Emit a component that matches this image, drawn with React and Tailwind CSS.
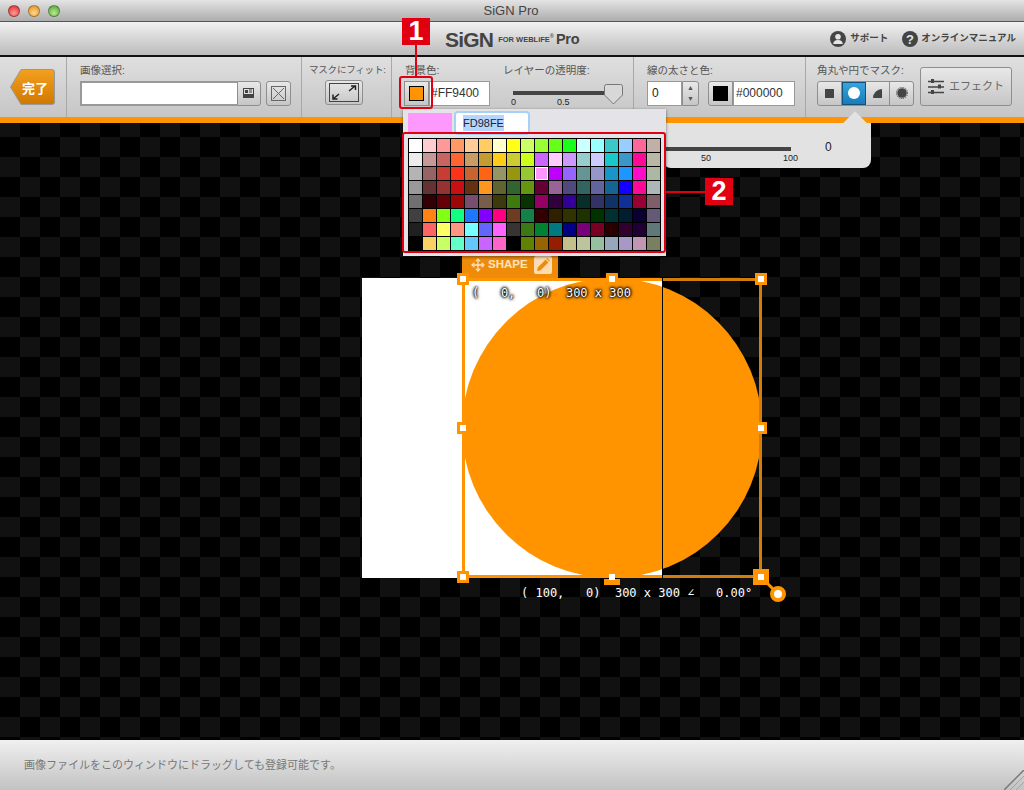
import { Move } from "lucide-react";

const jp = "font-['Liberation_Sans','Noto_Sans_CJK_JP',sans-serif]";

const palette = [
  "ffffff ffccd0 ff9999 ff9966 ffcc99 ffcc66 ffffcc ffff19 ccff66 99ff33 66ff19 19ff19 ccffff 99ffff 3cc8c8 99ccff ff6699 c0b0a8",
  "ececec c89898 c86464 ff6433 c89c64 c49c32 ffcc19 cccc32 ccff19 cc66ff ffccff cc99ff 99cccc ccccff 19c8c8 3c96c8 ff0a96 b8b8a4",
  "b4b4b4 966464 c83c32 ff3219 c86432 ff6414 969664 96960f 96c832 ff96ff c000ff 9664ff 649696 9696c8 1996c8 1e96ff ff0ac8 acb8a4",
  "999999 643232 963232 c80f14 643210 ff961e 5f6432 326432 649610 640032 966496 504a7c 326460 64649c 146496 1400ff ff0a96 acb8b8",
  "707070 320005 640008 9c0808 784e6e 785e4a 3c3a0c 3e7a0e 083200 960064 32003c 320096 082e2c 323264 103264 103096 960032 7e5e68",
  "404040 ff8214 82ff14 14ff82 1e78ff 8200ff ff0082 6e3c20 148246 320000 302000 323200 1e3200 003200 003030 001e30 0a0032 645a78",
  "202020 ff6464 ffff64 ff9682 78ffff 6464ff ff64ff 383434 3c7814 008232 007882 000082 780078 780023 280000 32002d 1e0032 5f7878",
  "000000 fad264 c8ff64 64ffc8 64c8ff c864ff ff64c8 000000 5f8200 966400 961e00 c4c08c bcc49c 96c0a0 96a8be a898c8 c096b4 788060",
].map((row) => row.split(" "));

function Label({ children, className = "text-[10.5px]" }) {
  return <p className={`leading-none text-[#555] whitespace-nowrap ${className}`}>{children}</p>;
}

function Light({ className }) {
  return <span className={`h-3 w-3 rounded-full border border-black/30 ${className}`} />;
}

function TitleBar() {
  return (
    <div className="relative flex h-[22px] items-center border-b border-[#555] bg-gradient-to-b from-[#e4e4e4] to-[#adadad] pl-2">
      <div className="flex gap-2">
        <Light className="bg-[radial-gradient(circle_at_50%_70%,#ff9a94,#d8262a)]" />
        <Light className="bg-[radial-gradient(circle_at_50%_70%,#ffd88a,#de8a1e)]" />
        <Light className="bg-[radial-gradient(circle_at_50%_70%,#b8ea8e,#4f9d35)]" />
      </div>
      <p className="flex-1 pr-[62px] text-center font-['Liberation_Sans',sans-serif] text-[13px] text-[#444]">SiGN Pro</p>
    </div>
  );
}

function HeaderBar() {
  return (
    <div className="flex h-[35px] items-center border-b-2 border-[#111] bg-gradient-to-b from-[#f1f1f1] to-[#bcbcbc] pl-[445px] pr-[8px]">
      <span className="mt-[1px] font-['Liberation_Sans',sans-serif] text-[21px] font-bold leading-none tracking-[-0.8px] text-[#444]">SiGN</span>
      <span className="ml-[5px] mt-[3px] font-['Liberation_Sans',sans-serif] text-[7.5px] font-bold text-[#444]">FOR WEBLiFE</span>
      <span className="mb-[3px] text-[5px] text-[#444]">®</span>
      <span className="ml-[2px] mt-[1px] font-['Liberation_Sans',sans-serif] text-[14.5px] font-bold leading-none tracking-[-0.3px] text-[#444]">Pro</span>
      <div className={`ml-auto flex items-center text-[9.5px] font-bold text-[#444] ${jp}`}>
        <svg width="16" height="16" viewBox="0 0 16 16">
          <circle cx="8" cy="8" r="8" fill="#444" />
          <circle cx="8" cy="5.8" r="2.8" fill="#e4e4e4" />
          <path d="M3.2 13 Q3.5 9 8 9 Q12.5 9 12.8 13 Z" fill="#e4e4e4" />
        </svg>
        <span className="ml-[4px]">サポート</span>
        <svg className="ml-[14px]" width="16" height="16" viewBox="0 0 16 16">
          <circle cx="8" cy="8" r="8" fill="#444" />
          <text x="8" y="12.5" textAnchor="middle" fontSize="13" fontWeight="700" fontFamily="Liberation Sans" fill="#e4e4e4">?</text>
        </svg>
        <span className="ml-[3px]">オンラインマニュアル</span>
      </div>
    </div>
  );
}

function Section({ className = "", children }) {
  return <div className={`relative h-full shrink-0 border-r border-[#a8a8a8] ${className}`}>{children}</div>;
}

function Toolbar() {
  const box = "border border-[#8e8e8e] bg-gradient-to-b from-[#e8e8e8] to-[#c6c6c6]";
  return (
    <div className={`flex h-[60px] bg-gradient-to-b from-[#dfdfdf] to-[#c6c6c6] ${jp}`}>
      <Section className="flex w-[67px] items-center pl-[10px]">
        <svg width="45" height="37" viewBox="0 0 45 37">
          <defs>
            <linearGradient id="done" x1="0" y1="0" x2="0" y2="1">
              <stop offset="0" stopColor="#f3a020" />
              <stop offset="1" stopColor="#d07800" />
            </linearGradient>
          </defs>
          <path d="M11 .5H42a2.5 2.5 0 0 1 2.5 2.5V33a2.5 2.5 0 0 1-2.5 2.5H11L.5 18Z" fill="url(#done)" stroke="#999" />
          <text x="25" y="24" textAnchor="middle" fontSize="13" fontWeight="700" fill="#fff" fontFamily="Noto Sans CJK JP">完了</text>
        </svg>
      </Section>

      <Section className="w-[235px] pl-[13px] pt-[8px]">
        <Label className="mb-[5px] text-[10.5px]">画像選択:</Label>
        <div className="flex items-center">
          <div className="h-[25px] w-[157px] border-2 border-r-0 border-[#999] bg-white" />
          <button className={`flex h-[25px] w-[24px] items-center justify-center rounded-r-[3px] ${box}`}>
            <svg width="12" height="11" viewBox="0 0 12 11">
              <rect width="11" height="10" fill="#444" />
              <rect x="1" y="1" width="9" height="5" fill="#ddd" />
              <rect x="2" y="2" width="3" height="3" fill="#444" />
              <path d="M6 2h3M6 4h3" stroke="#444" />
            </svg>
          </button>
          <button className={`ml-[5px] flex h-[25px] w-[25px] items-center justify-center rounded-[3px] ${box}`}>
            <svg width="15" height="15" viewBox="0 0 15 15" fill="none" stroke="#666">
              <rect x=".5" y=".5" width="14" height="14" />
              <path d="M2 2l11 11M13 2L2 13" />
            </svg>
          </button>
        </div>
      </Section>

      <Section className="w-[90px] pl-[7px] pt-[8px]">
        <Label className="mb-[5px] text-[9.5px] tracking-[-0.2px]">マスクにフィット:</Label>
        <button className={`ml-[16px] flex h-[25px] w-[38px] items-center justify-center rounded-[3px] ${box}`}>
          <svg width="30" height="19" viewBox="0 0 30 19" fill="none">
            <rect x=".5" y=".5" width="29" height="18" stroke="#444" />
            <path d="M20 8l6-5M22 3h4.5v4" stroke="#222" strokeWidth="1.5" />
            <path d="M10 11l-6 5M4 11.5V16h4.5" stroke="#222" strokeWidth="1.5" />
          </svg>
        </button>
      </Section>

      <Section className="w-[242px] pl-[13px] pt-[8px]">
        <div className="flex">
          <Label className="w-[98px] text-[10.5px]">背景色:</Label>
          <Label>レイヤーの透明度:</Label>
        </div>
        <div className="mt-[5px] flex items-start">
          <button className={`-ml-px flex h-[25px] w-[25px] shrink-0 items-center justify-center ${box}`}>
            <span className="h-[15px] w-[15px] border border-black bg-[#ff9400]" />
          </button>
          <div className="flex h-[25px] w-[61px] items-center border border-[#999] bg-white pl-[1px] font-['Liberation_Sans',sans-serif] text-[12px] text-[#333]">#FF9400</div>
          <div className="relative ml-[23px] mt-[10px] w-[110px]">
            <div className="h-[4px] w-[92px] bg-[#444]" />
            <div className="-ml-[2px] mt-[3px] flex font-['Liberation_Sans',sans-serif] text-[9px] leading-none text-[#222]">
              <span className="w-[46px]">0</span>
              <span>0.5</span>
            </div>
            <svg className="absolute left-[91px] top-[-7px]" width="19" height="21" viewBox="0 0 19 21">
              <path d="M.5 2.5a2 2 0 0 1 2-2h14a2 2 0 0 1 2 2V11l-9 9-9-9Z" fill="#d8d8d8" stroke="#777" />
            </svg>
          </div>
        </div>
      </Section>

      <Section className="w-[172px] pl-[13px] pt-[8px]">
        <Label className="mb-[5px] text-[10.5px]">線の太さと色:</Label>
        <div className="flex">
          <div className="flex h-[25px] w-[35px] items-center border border-[#999] bg-white pl-[4px] font-['Liberation_Sans',sans-serif] text-[12px] text-[#222]">0</div>
          <div className={`flex h-[25px] w-[17px] flex-col items-center justify-around rounded-r-[3px] text-[7px] leading-none text-[#555] ${box}`}>
            <span>▲</span>
            <span>▼</span>
          </div>
          <div className={`ml-[9px] flex h-[25px] w-[25px] items-center justify-center rounded-l-[3px] ${box}`}>
            <span className="h-[15px] w-[15px] bg-black" />
          </div>
          <div className="flex h-[25px] w-[62px] items-center border border-[#999] bg-white pl-[2px] font-['Liberation_Sans',sans-serif] text-[12px] text-[#333]">#000000</div>
        </div>
      </Section>

      <div className="h-full flex-1 pl-[11px] pt-[8px]">
        <div className="flex">
          <div>
            <Label className="mb-[5px] text-[10.5px]">角丸や円でマスク:</Label>
            <div className={`flex h-[25px] w-[97px] rounded-[3px] ${box}`}>
              <div className="flex w-[24px] items-center justify-center border-r border-[#8e8e8e]">
                <span className="h-[9px] w-[9px] bg-[#444]" />
              </div>
              <div className="flex w-[24px] items-center justify-center border border-[#14507a] bg-gradient-to-b from-[#38a4dc] to-[#147cb8]">
                <span className="h-[12px] w-[12px] rounded-full bg-white" />
              </div>
              <div className="flex w-[24px] items-center justify-center border-r border-[#8e8e8e]">
                <span className="h-[9px] w-[9px] rounded-tl-[9px] bg-[#444]" />
              </div>
              <div className="flex flex-1 items-center justify-center">
                <svg width="12" height="12" viewBox="0 0 12 12">
                  <circle cx="6" cy="6" r="4.8" fill="#444" />
                  <circle cx="6" cy="6" r="5.6" fill="none" stroke="#444" strokeDasharray="1.1 1.1" />
                </svg>
              </div>
            </div>
          </div>
          <button className={`ml-[6px] mt-[2px] flex h-[39px] w-[92px] items-center justify-center gap-[4px] rounded-[3px] text-[11px] text-[#666] ${box}`}>
            <svg width="17" height="16" viewBox="0 0 17 16">
              <path d="M0 2.5h16M0 8h16M0 13.5h16" stroke="#444" strokeWidth="1.5" />
              <rect x="3" y="0" width="3" height="4" fill="#444" />
              <rect x="10" y="5.5" width="3" height="4" fill="#444" />
              <rect x="3" y="11" width="3" height="4" fill="#444" />
            </svg>
            エフェクト
          </button>
        </div>
      </div>
    </div>
  );
}

function Handle({ className }) {
  return (
    <span className={`absolute flex items-center justify-center bg-[#ff9400] ${className}`}>
      <span className="h-[6px] w-[6px] bg-white" />
    </span>
  );
}

function Canvas() {
  return (
    <div className="relative flex-1 overflow-hidden bg-black bg-[conic-gradient(#000_25%,#111_0_50%,#000_0_75%,#111_0)] bg-[length:40px_40px] bg-[position:0px_-6px]">
      {/* page coordinates minus the 123px the bars above take up */}
      <div className="absolute left-[362px] top-[155px] h-[300px] w-[300px] bg-white" />
      <div className="absolute left-[462px] top-[155px] h-[300px] w-[300px] rounded-full bg-[#ff9400]" />
      <div className="absolute left-[662px] top-[155px] h-[300px] w-px bg-black" />

      <div className="absolute left-[462px] top-[155px] h-[3px] w-[200px] bg-[#ff9400]" />
      <div className="absolute left-[663px] top-[155px] h-[3px] w-[99px] bg-[#d27d0c]" />
      <div className="absolute left-[462px] top-[155px] h-[300px] w-[3px] bg-[#ff9400]" />
      <div className="absolute left-[759px] top-[155px] h-[300px] w-[3px] bg-[#d27d0c]" />
      <div className="absolute left-[462px] top-[452px] h-[3px] w-[200px] bg-[#ff9400]" />
      <div className="absolute left-[663px] top-[452px] h-[3px] w-[99px] bg-[#d27d0c]" />

      <div className="absolute left-[462px] top-[132px] flex h-[23px] w-[96px] items-center bg-[#ee8c0a] pb-[4px] pl-[9px] font-['Liberation_Sans',sans-serif] text-[11.5px] font-bold text-[#fde3c0]">
        <Move size={14} strokeWidth={2.2} />
        <span className="ml-[3px]">SHAPE</span>
        <span className="ml-[6px] flex h-[18px] w-[18px] items-center justify-center rounded-[2px] bg-[#fcdcb0]">
          <svg width="14" height="14" viewBox="0 0 14 14" fill="#ee8c0a">
            <path d="M1 13l.8-3.6L9.6 1.6l2.8 2.8-7.8 7.8Z" />
            <path d="M10.4.8 11.2 0 14 2.8l-.8.8Z" />
          </svg>
        </span>
      </div>

      <svg className="absolute left-[760px] top-[453px]" width="30" height="30" viewBox="0 0 30 30">
        <path d="M1 1l17 17" stroke="#ff9400" strokeWidth="3" />
        <circle cx="18" cy="18" r="6" fill="#fff" stroke="#ff9400" strokeWidth="4" />
      </svg>

      <Handle className="left-[457px] top-[150px] h-[12px] w-[12px]" />
      <Handle className="left-[606px] top-[150px] h-[12px] w-[12px]" />
      <Handle className="left-[755px] top-[150px] h-[12px] w-[12px]" />
      <Handle className="left-[457px] top-[299px] h-[12px] w-[12px]" />
      <Handle className="left-[755px] top-[299px] h-[12px] w-[12px]" />
      <Handle className="left-[457px] top-[448px] h-[12px] w-[12px]" />
      <span className="absolute left-[604px] top-[456px] h-[6px] w-[16px] bg-[#ff9400]" />
      <span className="absolute left-[609px] top-[451px] h-[6px] w-[6px] bg-white" />
      <Handle className="left-[753px] top-[446px] h-[16px] w-[16px]" />

      <p className="absolute left-[472px] top-[164px] whitespace-pre font-['DejaVu_Sans_Mono',monospace] text-[12px] leading-none text-white [text-shadow:0_0_2px_#000,0_0_3px_#000,0_0_3px_#000,0_0_4px_#000]">
        {"(   0,   0)  300 x 300"}
      </p>
      <p className="absolute left-[521px] top-[464px] whitespace-pre font-['DejaVu_Sans_Mono',monospace] text-[12px] leading-none text-white">
        {"( 100,   0)  300 x 300 ∠   0.00°"}
      </p>
    </div>
  );
}

function StatusBar() {
  return (
    <div className={`relative flex h-[50px] items-center overflow-hidden bg-gradient-to-b from-[#f0f0f0] to-[#c2c2c2] pl-[24px] text-[11px] text-[#777] ${jp}`}>
      画像ファイルをこのウィンドウにドラッグしても登録可能です。
      <svg className="absolute bottom-0 right-0" width="20" height="20" viewBox="0 0 20 20" fill="none">
        <path d="M0 20 20 0" stroke="#777" strokeWidth="1.5" />
        <path d="M6 20 20 6M12 20l8-8" stroke="#a4a4a4" />
      </svg>
    </div>
  );
}

function ColorPopover() {
  return (
    <div className="absolute left-[403px] top-[109px] h-[147px] w-[263px] bg-[#e4e4e8] shadow-[0_1px_3px_rgba(0,0,0,0.5)]">
      <div className="flex pl-[5px] pt-[4px]">
        <span className="h-[19px] w-[44px] bg-[#fd98fe]" />
        <div className="ml-[4px] flex h-[20px] w-[72px] items-center rounded-[2px] bg-white pl-[7px] font-['Liberation_Sans',sans-serif] text-[11px] text-[#223] shadow-[0_0_0_2px_#a8d0f4]">
          <span className="bg-[#b4d5fe]">FD98FE</span>
        </div>
      </div>
      <div className="ml-[5px] mt-[5px] grid w-[253px] grid-cols-[repeat(18,14px)] grid-rows-[repeat(8,14px)] bg-black pl-px pt-px">
        {palette.flat().map((color, i) => (
          <span
            key={i}
            className={i === 45 ? "mb-px mr-px border border-white" : "mb-px mr-px"}
            style={{ backgroundColor: `#${color}` }}
          />
        ))}
      </div>
    </div>
  );
}

function OpacityPopover() {
  return (
    <>
      <div className="absolute left-[663px] top-[123px] h-[45px] w-[208px] rounded-b-[8px] bg-[#e2e2e2] font-['Liberation_Sans',sans-serif] text-[#222]">
        <div className="absolute left-[3px] top-[24px] h-[4px] w-[125px] bg-[#444]" />
        <span className="absolute left-[38px] top-[31px] text-[9px] leading-none">50</span>
        <span className="absolute left-[120px] top-[31px] text-[9px] leading-none">100</span>
        <span className="absolute left-[162px] top-[18px] text-[12px] leading-none">0</span>
      </div>
      <div className="absolute left-[846px] top-[115px] h-[18px] w-[18px] rotate-45 bg-[#e2e2e2]" />
    </>
  );
}

function Callouts() {
  const tag = "absolute flex h-[27px] w-[28px] items-center justify-center bg-[#e00012] font-['Liberation_Sans',sans-serif] text-[27px] font-bold leading-none text-white";
  return (
    <>
      <div className="absolute left-[399px] top-[76px] h-[33px] w-[34px] rounded-[3px] border-2 border-[#e00012]" />
      <div className="absolute left-[415px] top-[45px] h-[31px] w-[2px] bg-[#e00012]" />
      <span className={`${tag} left-[402px] top-[18px]`}>1</span>
      <div className="absolute left-[402px] top-[132px] h-[121px] w-[264px] rounded-[3px] border-2 border-[#e00012]" />
      <div className="absolute left-[666px] top-[191px] h-[2px] w-[39px] bg-[#e00012]" />
      <span className={`${tag} left-[705px] top-[178px]`}>2</span>
    </>
  );
}

export default function App() {
  return (
    <div className="relative flex h-[790px] w-[1024px] flex-col overflow-hidden">
      <TitleBar />
      <HeaderBar />
      <Toolbar />
      <div className="h-[6px] bg-[#ff9400]" />
      <Canvas />
      <StatusBar />
      <OpacityPopover />
      <ColorPopover />
      <Callouts />
    </div>
  );
}
